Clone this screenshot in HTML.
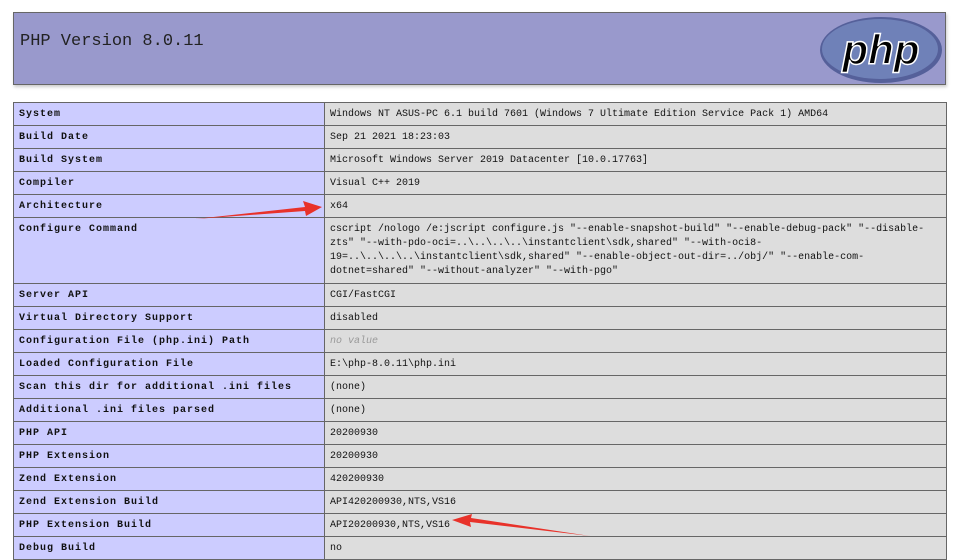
<!DOCTYPE html>
<html><head><meta charset="utf-8"><style>
body{margin:0;background:#fff;font-family:"Liberation Mono",monospace;position:relative;width:979px;height:559px;overflow:hidden}
.h{position:absolute;left:13px;top:12px;width:931px;height:71px;background:#9999cc;border:1px solid #666;box-shadow:1px 2px 3px #ccc}
.h .t{position:absolute;left:6px;top:19px;font-size:17px;color:#222}
table{position:absolute;left:13px;top:102px;border-collapse:collapse;width:934px}
td{border:1px solid #666;font-size:10px;padding:0 5px;height:22px;vertical-align:middle;color:#111}
td.e{background:#ccccff;font-weight:bold;letter-spacing:1px;width:300px}
td.v{background:#dddddd}
tr.cc td{vertical-align:top;padding-top:5px;height:60px;line-height:14px}
i{color:#999}
</style></head><body>
<div class="h"><div class="t">PHP Version 8.0.11</div>
<svg style="position:absolute;left:804px;top:2px" width="126" height="70"><ellipse cx="63" cy="35" rx="61" ry="33" fill="#55609a"/><ellipse cx="62" cy="34" rx="58" ry="30" fill="#6f81b8"/><text x="63" y="49" text-anchor="middle" font-family="Liberation Sans" font-weight="bold" font-style="italic" font-size="42" fill="#000" stroke="#fff" stroke-width="1.5">php</text></svg>
</div>
<table>
<tr><td class="e">System</td><td class="v">Windows NT ASUS-PC 6.1 build 7601 (Windows 7 Ultimate Edition Service Pack 1) AMD64</td></tr>
<tr><td class="e">Build Date</td><td class="v">Sep 21 2021 18:23:03</td></tr>
<tr><td class="e">Build System</td><td class="v">Microsoft Windows Server 2019 Datacenter [10.0.17763]</td></tr>
<tr><td class="e">Compiler</td><td class="v">Visual C++ 2019</td></tr>
<tr><td class="e">Architecture</td><td class="v">x64</td></tr>
<tr class="cc"><td class="e">Configure Command</td><td class="v">cscript /nologo /e:jscript configure.js "--enable-snapshot-build" "--enable-debug-pack" "--disable-zts" "--with-pdo-oci=..\..\..\..\instantclient\sdk,shared" "--with-oci8-19=..\..\..\..\instantclient\sdk,shared" "--enable-object-out-dir=../obj/" "--enable-com-dotnet=shared" "--without-analyzer" "--with-pgo"</td></tr>
<tr><td class="e">Server API</td><td class="v">CGI/FastCGI</td></tr>
<tr><td class="e">Virtual Directory Support</td><td class="v">disabled</td></tr>
<tr><td class="e">Configuration File (php.ini) Path</td><td class="v"><i>no value</i></td></tr>
<tr><td class="e">Loaded Configuration File</td><td class="v">E:\php-8.0.11\php.ini</td></tr>
<tr><td class="e">Scan this dir for additional .ini files</td><td class="v">(none)</td></tr>
<tr><td class="e">Additional .ini files parsed</td><td class="v">(none)</td></tr>
<tr><td class="e">PHP API</td><td class="v">20200930</td></tr>
<tr><td class="e">PHP Extension</td><td class="v">20200930</td></tr>
<tr><td class="e">Zend Extension</td><td class="v">420200930</td></tr>
<tr><td class="e">Zend Extension Build</td><td class="v">API420200930,NTS,VS16</td></tr>
<tr><td class="e">PHP Extension Build</td><td class="v">API20200930,NTS,VS16</td></tr>
<tr><td class="e">Debug Build</td><td class="v">no</td></tr>
</table>
<svg style="position:absolute;left:0;top:0" width="979" height="559">
<polygon points="195,219 305,207 303,201 322,207 306,216 305,211" fill="#e8322a"/>
<polygon points="590,536 470,522 471,527 452,520 472,514 471,518" fill="#e8322a"/>
</svg>
</body></html>
